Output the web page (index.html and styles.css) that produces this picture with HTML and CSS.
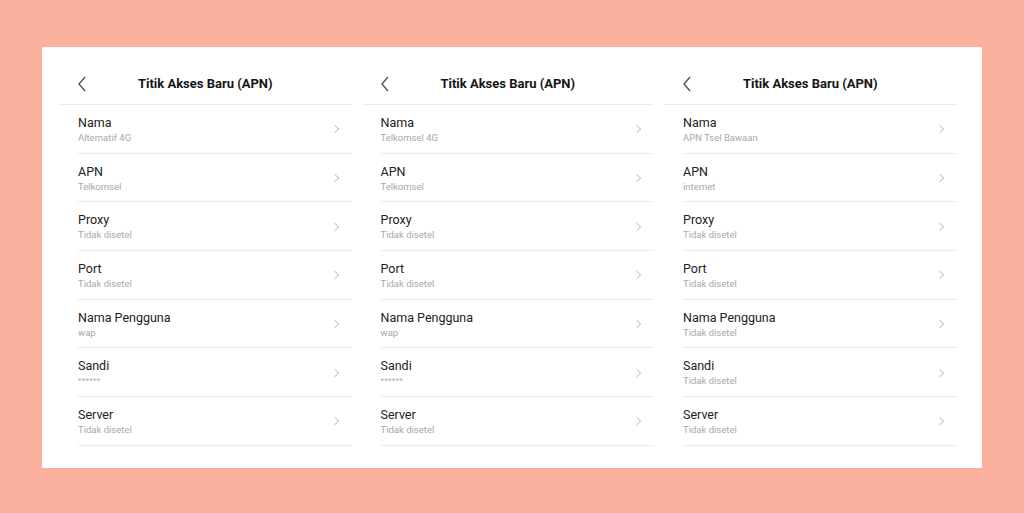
FILE: index.html
```html
<!DOCTYPE html>
<html lang="id">
<head>
    <meta charset="UTF-8">
    <meta name="viewport" content="width=device-width, initial-scale=1.0">
    <title>Titik Akses Baru (APN)</title>
    <link rel="stylesheet" href="styles.css">
</head>
<body>
    <div class="card">
        <!-- screen 1 -->
        <div class="screen">
            <div class="header">
                <svg class="back" width="8" height="16" viewBox="0 0 8 16"><path d="M7 1 L1 8 L7 15" fill="none" stroke="#555" stroke-width="1.4"/></svg>
                <h1>Titik Akses Baru (APN)</h1>
            </div>
            <div class="row"><div class="text"><div class="label">Nama</div><div class="value">Alternatif 4G</div></div><span class="chev"></span></div>
            <div class="row"><div class="text"><div class="label">APN</div><div class="value">Telkomsel</div></div><span class="chev"></span></div>
            <div class="row"><div class="text"><div class="label">Proxy</div><div class="value">Tidak disetel</div></div><span class="chev"></span></div>
            <div class="row"><div class="text"><div class="label">Port</div><div class="value">Tidak disetel</div></div><span class="chev"></span></div>
            <div class="row"><div class="text"><div class="label">Nama Pengguna</div><div class="value">wap</div></div><span class="chev"></span></div>
            <div class="row"><div class="text"><div class="label">Sandi</div><div class="value stars">******</div></div><span class="chev"></span></div>
            <div class="row"><div class="text"><div class="label">Server</div><div class="value">Tidak disetel</div></div><span class="chev"></span></div>
        </div>

        <!-- screen 2 -->
        <div class="screen">
            <div class="header">
                <svg class="back" width="8" height="16" viewBox="0 0 8 16"><path d="M7 1 L1 8 L7 15" fill="none" stroke="#555" stroke-width="1.4"/></svg>
                <h1>Titik Akses Baru (APN)</h1>
            </div>
            <div class="row"><div class="text"><div class="label">Nama</div><div class="value">Telkomsel 4G</div></div><span class="chev"></span></div>
            <div class="row"><div class="text"><div class="label">APN</div><div class="value">Telkomsel</div></div><span class="chev"></span></div>
            <div class="row"><div class="text"><div class="label">Proxy</div><div class="value">Tidak disetel</div></div><span class="chev"></span></div>
            <div class="row"><div class="text"><div class="label">Port</div><div class="value">Tidak disetel</div></div><span class="chev"></span></div>
            <div class="row"><div class="text"><div class="label">Nama Pengguna</div><div class="value">wap</div></div><span class="chev"></span></div>
            <div class="row"><div class="text"><div class="label">Sandi</div><div class="value stars">******</div></div><span class="chev"></span></div>
            <div class="row"><div class="text"><div class="label">Server</div><div class="value">Tidak disetel</div></div><span class="chev"></span></div>
        </div>

        <!-- screen 3 -->
        <div class="screen">
            <div class="header">
                <svg class="back" width="8" height="16" viewBox="0 0 8 16"><path d="M7 1 L1 8 L7 15" fill="none" stroke="#555" stroke-width="1.4"/></svg>
                <h1>Titik Akses Baru (APN)</h1>
            </div>
            <div class="row"><div class="text"><div class="label">Nama</div><div class="value">APN Tsel Bawaan</div></div><span class="chev"></span></div>
            <div class="row"><div class="text"><div class="label">APN</div><div class="value">internet</div></div><span class="chev"></span></div>
            <div class="row"><div class="text"><div class="label">Proxy</div><div class="value">Tidak disetel</div></div><span class="chev"></span></div>
            <div class="row"><div class="text"><div class="label">Port</div><div class="value">Tidak disetel</div></div><span class="chev"></span></div>
            <div class="row"><div class="text"><div class="label">Nama Pengguna</div><div class="value">Tidak disetel</div></div><span class="chev"></span></div>
            <div class="row"><div class="text"><div class="label">Sandi</div><div class="value">Tidak disetel</div></div><span class="chev"></span></div>
            <div class="row"><div class="text"><div class="label">Server</div><div class="value">Tidak disetel</div></div><span class="chev"></span></div>
        </div>
    </div>
</body>
</html>
```

FILE: styles.css
```css
body {
    margin: 0;
    background: #f9b09d;
    font-family: Roboto, "Noto Sans", Arial, sans-serif;
    height: 513px;
    overflow: hidden;
}

.card {
    margin: 47px 0 0 42px;
    width: 940px;
    height: 421px;
    box-sizing: border-box;
    background: #fff;
    padding-left: 17px;
    display: flex;
    gap: 10px;
}

.screen {
    width: 292.5px;
}

.header {
    position: relative;
    height: 58px;
    box-sizing: border-box;
    padding-top: 29px;
    border-bottom: 1px solid #ececec;
    display: flex;
    justify-content: center;
}

.back {
    position: absolute;
    left: 19px;
    top: 29px;
}

.header h1 {
    margin: 0;
    font-size: 13px;
    line-height: 16px;
    font-weight: 700;
    color: #151515;
}

.row {
    margin-left: 19px;
    height: 47.7px;
    border-bottom: 1px solid #ececec;
    display: flex;
    align-items: center;
    justify-content: space-between;
}

.text {
    margin-top: 1px;
}

.label {
    font-size: 12.5px;
    color: #222;
    line-height: 16px;
}

.value {
    font-size: 9.5px;
    color: #a8a8a8;
    line-height: 13px;
}

.value.stars {
    font-size: 8px;
    letter-spacing: 0.3px;
}

.chev {
    width: 5px;
    height: 5px;
    border-top: 1px solid #c8c8c8;
    border-right: 1px solid #c8c8c8;
    transform: rotate(45deg);
    margin-right: 14px;
    margin-top: 1px;
}
```
